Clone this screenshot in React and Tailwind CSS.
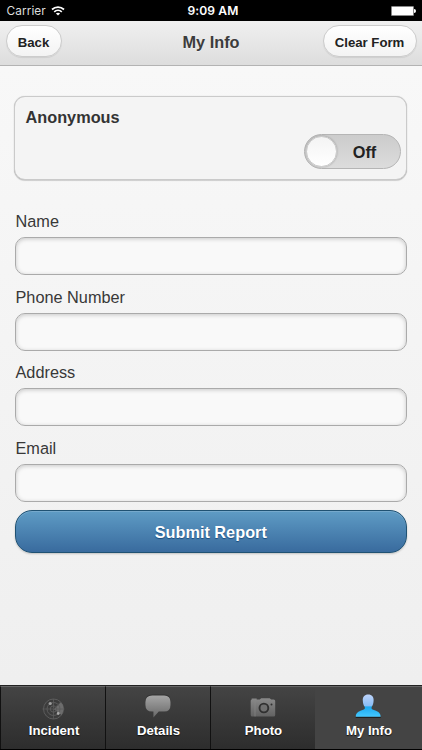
import React from "react";

function Wifi() {
  return (
    <svg className="-mt-[2px]" width="14" height="10" viewBox="0 0 14 10" fill="none" stroke="#fff" strokeWidth="1.7">
      <path d="M1 3.5C4.4 0.4 9.6 0.4 13 3.5" />
      <path d="M3.2 5.9C5.4 3.9 8.6 3.9 10.8 5.9" />
      <path d="M7 9.6L4.9 7.4C6.1 6.4 7.9 6.4 9.1 7.4Z" fill="#fff" stroke="none" />
    </svg>
  );
}

function Radar() {
  return (
    <svg width="24" height="24" viewBox="0 0 24 24" fill="none" stroke="#5c5c5c" strokeWidth="1">
      <circle cx="11.5" cy="13" r="10" fill="#3c3c3c" />
      <path d="M11.5 13L18.5 5.8A10 10 0 0 1 19.5 19Z" fill="#6c6c6c" stroke="none" />
      <circle cx="11.5" cy="13" r="6.5" />
      <circle cx="11.5" cy="13" r="3.2" />
      <path d="M0.5 13H22.5M11.5 3V23" strokeWidth="0.8" />
      <path d="M11.5 13L18.5 6" stroke="#444" />
      <circle cx="8.2" cy="7.5" r="1.6" fill="#a0a0a0" stroke="none" />
      <circle cx="16.2" cy="17.5" r="1.4" fill="#aaa" stroke="none" />
    </svg>
  );
}

function Bubble() {
  return (
    <svg width="28" height="26" viewBox="0.8 0 28 26">
      <defs>
        <linearGradient id="bubble" x1="0" y1="0" x2="0" y2="1">
          <stop offset="0" stopColor="#a6a6a6" />
          <stop offset="1" stopColor="#686868" />
        </linearGradient>
      </defs>
      <path d="M8 0.6H20Q26.3 0.6 26.3 7V10.8Q26.3 17.2 20 17.2H15L9 22.4V17.2H8Q1.2 17.2 1.2 10.8V7Q1.2 0.6 8 0.6Z" fill="#333" />
      <path d="M8 1.4H20Q26.3 1.4 26.3 8V11Q26.3 17.6 20 17.6H14.6L9.2 23.4V17.6H8Q1.2 17.6 1.2 11V8Q1.2 1.4 8 1.4Z" fill="url(#bubble)" />
    </svg>
  );
}

function Camera() {
  return (
    <svg width="28" height="26" viewBox="1.3 -0.5 28 26">
      <defs>
        <linearGradient id="camera" x1="0" y1="0" x2="0" y2="1">
          <stop offset="0" stopColor="#8a8a8a" />
          <stop offset="1" stopColor="#626262" />
        </linearGradient>
      </defs>
      <path d="M3 4H8V5H11L12.5 3.7H21L22.5 5H25Q26.5 5 26.5 6.5V20.5Q26.5 22 25 22H3.5Q2 22 2 20.5V6.5Q2 5 3 5Z" fill="url(#camera)" />
      <path d="M6.3 5V22" stroke="#888" strokeWidth="0.7" />
      <circle cx="15.2" cy="13.5" r="4.4" fill="#707070" stroke="#303030" strokeWidth="1.9" />
      <circle cx="22.8" cy="10" r="1" fill="#303030" />
    </svg>
  );
}

function Person() {
  return (
    <svg width="28" height="26" viewBox="0.8 0 28 26">
      <defs>
        <linearGradient id="person" x1="0" y1="0" x2="0" y2="1">
          <stop offset="0" stopColor="#bed4fb" />
          <stop offset="0.5" stopColor="#8abdf5" />
          <stop offset="0.56" stopColor="#1caaf1" />
          <stop offset="1" stopColor="#45c8ff" />
        </linearGradient>
      </defs>
      <path d="M1.5 22.5V24H26.5V22.5Z" fill="#202020" />
      <path d="M14 0.5C17.6 0.5 19.8 3 19.4 6.6C19.3 9.6 18.6 11.4 17.4 13V14.8C19.4 16.8 26.5 16.6 26.5 22.8H1.5C1.5 16.6 8.6 16.8 10.6 14.8V13C9.4 11.4 8.7 9.6 8.6 6.6C8.2 3 10.4 0.5 14 0.5Z" fill="url(#person)" />
    </svg>
  );
}

const fields = ["Name", "Phone Number", "Address", "Email"];
const tabs = [
  ["Incident", Radar],
  ["Details", Bubble],
  ["Photo", Camera],
  ["My Info", Person],
];

export default function App() {
  return (
    <div className="flex h-[750px] w-[422px] flex-col overflow-hidden bg-linear-to-b from-[#f9f9f9] to-[#eeeeee] font-['Liberation_Sans',Arial,sans-serif] text-[#333]">
      <div className="grid h-[21px] shrink-0 grid-cols-3 items-center bg-black pt-[2px] font-['Inter',sans-serif] text-white">
        <div className="flex items-center gap-[5px] pl-[6.5px] text-[#ddd]">
          <span className="text-[11.8px] tracking-[0.1px]">Carrier</span>
          <Wifi />
        </div>
        <span className="pl-[4px] text-center text-[12.1px] font-semibold tracking-[0.1px]">9:09 AM</span>
        <div className="-mt-[2px] flex items-center justify-end pr-[6px]">
          <span className="h-[10px] w-[23px] rounded-[1px] border border-[#888] bg-white" />
          <span className="h-[4px] w-[2px] rounded-r bg-white" />
        </div>
      </div>

      <header className="flex h-[45px] shrink-0 items-start justify-between border-b border-[#b3b3b3] bg-linear-to-b from-[#f0f0f0] to-[#dddddd] px-[5.5px] pt-[4px] [text-shadow:0_1px_0_#eee]">
        <div className="flex flex-1">
          <button className="h-[32px] w-[56px] rounded-full border border-[#ccc] bg-linear-to-b from-white to-[#f3f3f3] pt-[3px] text-[13.2px] font-bold text-[#222] shadow-[0_1px_1px_rgba(0,0,0,0.08)]">Back</button>
        </div>
        <h1 className="pt-[5px] text-[16.3px] leading-6 font-bold text-[#3c3c3c]">My Info</h1>
        <div className="flex flex-1 justify-end">
          <button className="h-[32px] w-[94px] rounded-full border border-[#ccc] bg-linear-to-b from-white to-[#f3f3f3] pt-[3px] text-[13.2px] font-bold whitespace-nowrap text-[#222] shadow-[0_1px_1px_rgba(0,0,0,0.08)]">Clear Form</button>
        </div>
      </header>

      <main className="flex flex-1 flex-col px-[15px] pt-[30px]">
        <section className="-mx-px flex h-[84px] w-[393px] flex-col rounded-[11px] border border-[#cacaca] bg-[#f4f4f4] pt-[9px] pr-[5px] pl-[10.5px] shadow-[0_0_1px_rgba(0,0,0,0.2),0_1px_1px_rgba(0,0,0,0.15)]">
          <h2 className="text-[16.3px] leading-[22px] font-bold">Anonymous</h2>
          <div className="mt-[6px] flex h-[35px] w-[97px] items-center self-end rounded-full border border-[#b5b5b5] bg-linear-to-b from-[#cccccc] to-[#dcdcdc] pl-px">
            <span className="size-[31px] rounded-full border border-[#ccc] bg-linear-to-b from-[#f4f4f4] to-white shadow-[0_0_2px_rgba(0,0,0,0.3)]" />
            <span className="flex-1 pt-px pr-[8px] text-center text-[16.3px] font-bold text-[#222]">Off</span>
          </div>
        </section>

        <form className="mt-[30px] flex flex-col">
          {fields.map((name) => (
            <label key={name} className="flex h-[75.5px] flex-col pt-px text-[16.3px] leading-[20px] text-[#383838]">
              <span className="pl-[0.5px]">{name}</span>
              <input className="mt-[6px] h-[38px] w-[391.5px] rounded-[10px] border border-[#aaa] bg-[#f9f9f9] shadow-[inset_0_1px_4px_rgba(0,0,0,0.2)]" />
            </label>
          ))}
          <button type="button" className="-mt-[2.5px] h-[43px] w-[391.5px] rounded-[17px] border border-[#205273] bg-linear-to-b from-[#5f9cc5] to-[#396b9e] pt-[2px] text-[16.3px] font-bold text-white shadow-[0_1px_2px_rgba(0,0,0,0.2),inset_0_1px_0_rgba(255,255,255,0.15)] [text-shadow:0_1px_1px_#194b7e]">Submit Report</button>
        </form>
      </main>

      <nav className="grid h-[65px] shrink-0 grid-cols-[106px_105px_104px_107px] border-t border-b border-t-[#222] border-b-black bg-[#333]">
        {tabs.map(([name, Icon], index) => (
          <div
            key={name}
            className={
              index === 3
                ? "flex flex-col items-center border-t border-t-[#666] bg-[#444] pt-[7px] pl-px text-white"
                : index === 2
                  ? "flex flex-col items-center border-t border-t-[#666] bg-linear-to-b from-[#444] to-[#2d2d2d] pt-[7px] pl-px text-white"
                  : index === 0
                    ? "flex flex-col items-center border-t border-r border-l border-t-[#666] border-r-[#111] border-l-[#111] bg-linear-to-b from-[#444] to-[#2d2d2d] pt-[7px] pl-[2px] text-white"
                    : "flex flex-col items-center border-t border-r border-t-[#666] border-r-[#111] bg-linear-to-b from-[#444] to-[#2d2d2d] pt-[7px] pl-px text-white"
            }
          >
            <span className="flex h-[26px] items-end">
              <Icon />
            </span>
            <span className="mt-px text-[13.2px] leading-[20px] font-bold [text-shadow:0_1px_1px_#111]">{name}</span>
          </div>
        ))}
      </nav>
    </div>
  );
}
